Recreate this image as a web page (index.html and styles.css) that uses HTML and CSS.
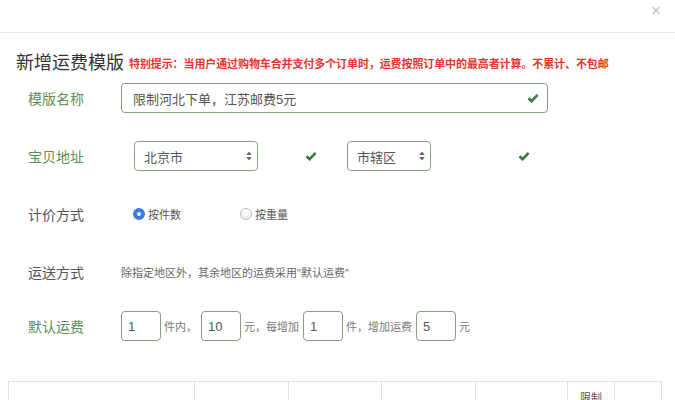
FILE: index.html
```html
<!DOCTYPE html>
<html lang="zh-CN">

<head>
    <meta charset="UTF-8">
    <meta name="viewport" content="width=device-width, initial-scale=1.0">
    <title>新增运费模版</title>
    <link rel="stylesheet" href="styles.css">
</head>

<body>
    <div class="modal-header">
        <span class="close">×</span>
    </div>
    <div class="modal-body">
        <div class="title-row">
            <h3 class="title">新增运费模版</h3>
            <span class="tip">特别提示：当用户通过购物车合并支付多个订单时，运费按照订单中的最高者计算。不累计、不包邮</span>
        </div>

        <!-- 模版名称 -->
        <div class="form-row">
            <label class="row-label ok">模版名称</label>
            <div class="name-box">
                <input type="text" class="name-input" value="限制河北下单，江苏邮费5元">
                <svg class="check check-in" width="12" height="10" viewBox="0 0 12 10"><polyline points="1.5,5.2 4.6,8.2 10.6,1.8" fill="none" stroke="#3f7a3f" stroke-width="2.6"/></svg>
            </div>
        </div>

        <!-- 宝贝地址 -->
        <div class="form-row">
            <label class="row-label ok">宝贝地址</label>
            <div class="addr-col">
                <div class="select sel-city">
                    <span>北京市</span>
                    <svg width="6" height="10" viewBox="0 0 6 10"><path d="M3 0.5 L5.8 4 L0.2 4 Z M3 9.5 L5.8 6 L0.2 6 Z" fill="#666"/></svg>
                </div>
                <svg class="check" width="12" height="10" viewBox="0 0 12 10"><polyline points="1.5,5.2 4.6,8.2 10.6,1.8" fill="none" stroke="#3f7a3f" stroke-width="2.6"/></svg>
            </div>
            <div class="addr-col">
                <div class="select sel-area">
                    <span>市辖区</span>
                    <svg width="6" height="10" viewBox="0 0 6 10"><path d="M3 0.5 L5.8 4 L0.2 4 Z M3 9.5 L5.8 6 L0.2 6 Z" fill="#666"/></svg>
                </div>
                <svg class="check" width="12" height="10" viewBox="0 0 12 10"><polyline points="1.5,5.2 4.6,8.2 10.6,1.8" fill="none" stroke="#3f7a3f" stroke-width="2.6"/></svg>
            </div>
        </div>

        <!-- 计价方式 -->
        <div class="form-row">
            <label class="row-label">计价方式</label>
            <span class="radio checked"><i></i>按件数</span>
            <span class="radio second"><i></i>按重量</span>
        </div>

        <!-- 运送方式 -->
        <div class="form-row">
            <label class="row-label">运送方式</label>
            <span class="note">除指定地区外，其余地区的运费采用"默认运费"</span>
        </div>

        <!-- 默认运费 -->
        <div class="form-row fee-row">
            <label class="row-label ok">默认运费</label>
            <input type="text" class="small-input" value="1">
            <span class="unit">件内，</span>
            <input type="text" class="small-input" value="10">
            <span class="unit">元，每增加</span>
            <input type="text" class="small-input" value="1">
            <span class="unit">件，增加运费</span>
            <input type="text" class="small-input" value="5">
            <span class="unit">元</span>
        </div>

        <table class="area-table">
            <tr>
                <th class="c1"></th>
                <th class="c2"></th>
                <th class="c3"></th>
                <th class="c4"></th>
                <th class="c5"></th>
                <th class="c6">限制条件</th>
                <th class="c7"></th>
            </tr>
        </table>
    </div>
</body>

</html>
```

FILE: styles.css
```css
/* 页面 */
body {
    margin: 0;
    padding: 0;
    background-color: #fff;
    font-family: "Liberation Sans", "Noto Sans CJK SC", sans-serif;
    color: #555;
    overflow: hidden;
}

/* 弹窗头部 */
.modal-header {
    height: 32px;
    border-bottom: 1px solid #e8e8e8;
    display: flex;
    justify-content: flex-end;
    align-items: flex-start;
}

.close {
    color: #c4c4c4;
    font-size: 17px;
    line-height: 20px;
    margin-right: 14px;
    margin-top: 1px;
}

/* 标题行 */
.title-row {
    display: flex;
    align-items: baseline;
    padding-left: 16px;
    margin-top: 16px;
    height: 24px;
}

.title {
    margin: 0;
    font-size: 18px;
    line-height: 24px;
    font-weight: normal;
    color: #333;
    font-family: "Noto Sans CJK SC", sans-serif;
}

.tip {
    margin-left: 5px;
    font-size: 11px;
    font-weight: bold;
    color: #e8332f;
    font-family: "Noto Sans CJK SC", sans-serif;
    letter-spacing: -0.1px;
    position: relative;
    top: -1px;
}

/* 表单行 */
.form-row {
    display: flex;
    align-items: center;
    height: 30px;
    padding-left: 28px;
    margin-top: 28px;
}

.title-row + .form-row {
    margin-top: 10px;
}

.fee-row {
    margin-top: 24px;
}

.row-label {
    width: 93px;
    font-size: 14px;
    color: #555;
    font-family: "Noto Sans CJK SC", sans-serif;
}

.row-label.ok {
    color: #5c8f55;
}

/* 模版名称输入框 */
.name-box {
    position: relative;
    width: 427px;
    height: 30px;
}

.name-input {
    width: 100%;
    height: 30px;
    box-sizing: border-box;
    border: 1px solid #86a17f;
    border-radius: 4px;
    padding: 0 30px 0 11px;
    font-size: 13px;
    color: #555;
    font-family: "Liberation Sans", "Noto Sans CJK SC", sans-serif;
    outline: none;
}

.check-in {
    position: absolute;
    right: 9px;
    top: 10px;
}

/* 地址选择 */
.addr-col {
    width: 213px;
    display: flex;
    align-items: center;
    padding-left: 13px;
    box-sizing: border-box;
}

.select {
    height: 30px;
    box-sizing: border-box;
    border: 1px solid #86a17f;
    border-radius: 4px;
    display: flex;
    align-items: center;
    justify-content: space-between;
    padding: 0 5px 0 9px;
    font-size: 13px;
    color: #555;
}

.sel-city {
    width: 124px;
}

.sel-area {
    width: 84px;
}

.sel-city + .check {
    margin-left: 47px;
}

.sel-area + .check {
    margin-left: 87px;
}

/* 单选 */
.radio {
    display: flex;
    align-items: center;
    font-size: 11px;
    color: #555;
    margin-left: 12px;
}

.radio i {
    width: 12px;
    height: 12px;
    border-radius: 50%;
    border: 1px solid #bbb;
    background: linear-gradient(#fff, #eee);
    margin-right: 3px;
    box-sizing: border-box;
}

.radio.checked i {
    border: 4px solid #3a7be6;
    background: #fff;
}

.radio.second {
    margin-left: 59px;
}

/* 运送方式说明 */
.note {
    font-size: 11px;
    color: #666;
}

/* 默认运费 */
.small-input {
    width: 40px;
    height: 30px;
    box-sizing: border-box;
    border: 1px solid #86a17f;
    border-radius: 4px;
    padding: 0 6px;
    font-size: 13px;
    color: #555;
    font-family: "Liberation Sans", sans-serif;
    outline: none;
}

.unit {
    font-size: 11px;
    color: #777;
    margin: 0 4px 0 3px;
}

/* 地区表格 */
.area-table {
    margin: 40px 0 0 8px;
    width: 653px;
    border-collapse: collapse;
    table-layout: fixed;
}

.area-table th {
    box-sizing: border-box;
    border: 1px solid #e2e2e2;
    font-size: 11px;
    font-weight: normal;
    color: #555;
    padding: 8px;
    line-height: 17px;
    vertical-align: top;
    text-align: center;
    height: 60px;
}

.c1 { width: 186px; }
.c2 { width: 94px; }
.c3 { width: 93px; }
.c4 { width: 94px; }
.c5 { width: 92px; }
.c6 { width: 47px; }
.c7 { width: 47px; }
```
